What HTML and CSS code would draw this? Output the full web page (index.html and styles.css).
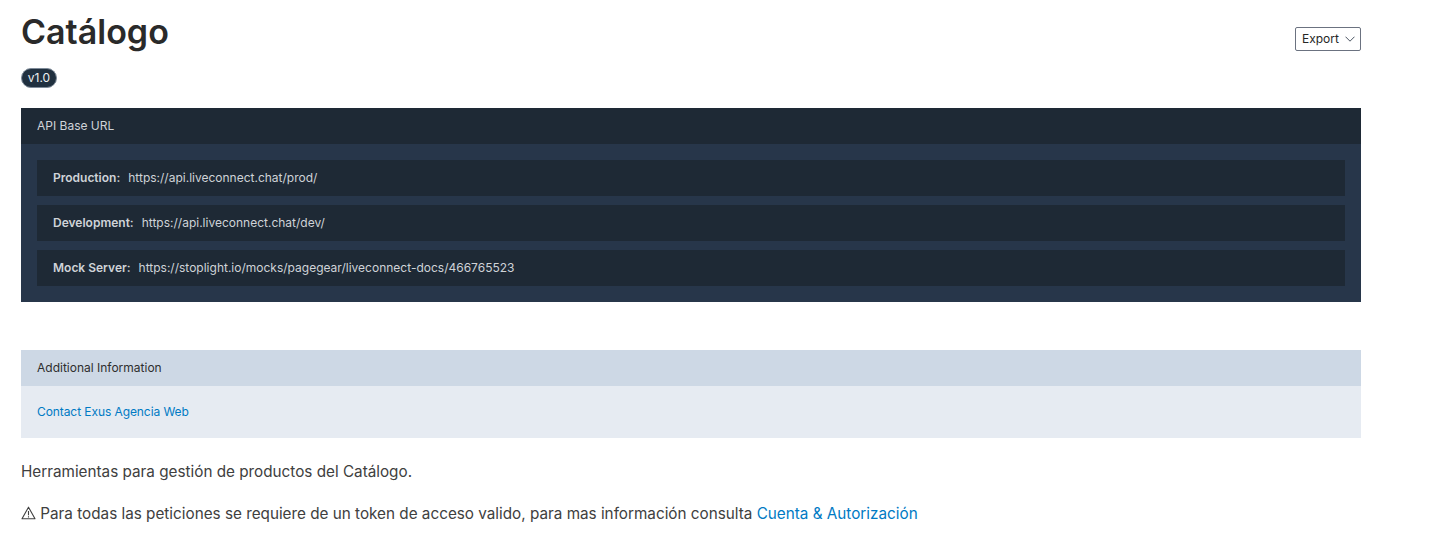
FILE: index.html
```html
<!DOCTYPE html>
<html lang="es">
<head>
<meta charset="utf-8">
<title>Catálogo</title>
<link rel="stylesheet" href="styles.css">
</head>
<body>
<main class="page">
  <header class="head">
    <div>
      <h1 class="title">Catálogo</h1>
      <span class="badge">v1.0</span>
    </div>
    <button class="export" type="button">Export
      <svg class="chev" width="10" height="6" viewBox="0 0 10 6" aria-hidden="true"><path d="M.5.7 5 5.2 9.5.7" fill="none" stroke="#4b5563" stroke-width="1"/></svg>
    </button>
  </header>
  <section class="servers">
    <div class="servers-head">API Base URL</div>
    <div class="servers-body">
      <div class="server"><strong>Production:</strong><span>https://api.liveconnect.chat/prod/</span></div>
      <div class="server"><strong>Development:</strong><span>https://api.liveconnect.chat/dev/</span></div>
      <div class="server"><strong>Mock Server:</strong><span>https://stoplight.io/mocks/pagegear/liveconnect-docs/466765523</span></div>
    </div>
  </section>
  <section class="info">
    <div class="info-head">Additional Information</div>
    <div class="info-body"><a href="#">Contact Exus Agencia Web</a></div>
  </section>
  <p class="text">Herramientas para gestión de productos del Catálogo.</p>
  <p class="text warn"><svg class="warn-icon" width="15" height="14" viewBox="0 0 15 14" aria-hidden="true"><path d="M7.5 1.2 14 12.8H1Z" fill="none" stroke="#404040" stroke-width="1.1" stroke-linejoin="round"/><path d="M7.5 5v4.2M7.5 10.2v1.2" fill="none" stroke="#404040" stroke-width="1.1"/></svg> Para todas las peticiones se requiere de un token de acceso valido, para mas información consulta <a href="#">Cuenta &amp; Autorización</a></p>
</main>
</body>
</html>
```
FILE: styles.css
```css
* { box-sizing: border-box; }
html, body { margin: 0; padding: 0; }
body {
  background: #fff;
  color: #262626;
  font-family: Inter, "Liberation Sans", sans-serif;
  font-size: 15.27px;
  height: 558px;
  overflow: hidden;
}
.page { width: 1340px; margin-left: 21px; padding-top: 12px; }
.head { display: flex; justify-content: space-between; align-items: flex-start; }
.title {
  margin: 0;
  font-size: 34px;
  line-height: 40px;
  font-weight: 600;
  color: #2a2a2a;
}
.badge {
  display: block;
  width: 36px;
  height: 20px;
  margin-top: 16px;
  border-radius: 10px;
  background: #20303f;
  border: 1px solid #7e8b99;
  color: #eef0f2;
  font-size: 12px;
  line-height: 18px;
  text-align: center;
}
.export {
  display: flex;
  align-items: center;
  gap: 6px;
  margin-top: 15px;
  width: 66px;
  height: 24px;
  padding: 0 0 0 6px;
  background: #fff;
  border: 1px solid #6b7280;
  border-radius: 2px;
  color: #262626;
  font: 12px/22px Inter, "Liberation Sans", sans-serif;
}
.servers { margin-top: 20px; background: #27364a; padding-bottom: 16px; }
.servers-head {
  height: 36px;
  padding: 0 16px;
  background: #1e2935;
  color: #cfd3d8;
  font-size: 12px;
  line-height: 36px;
}
.servers-body { display: flex; flex-direction: column; gap: 9px; padding: 16px 16px 0; }
.server {
  display: flex;
  gap: 8px;
  height: 36px;
  padding: 0 16px;
  background: #1e2935;
  color: #cfd3d8;
  font-size: 12px;
  line-height: 36px;
}
.server strong { font-weight: 600; }
.info { margin-top: 48px; }
.info-head {
  height: 36px;
  padding: 0 16px;
  background: #cdd8e5;
  color: #2e2e2e;
  font-size: 12px;
  line-height: 36px;
}
.info-body {
  height: 52px;
  padding: 0 16px;
  background: #e6ebf2;
  font-size: 12px;
  line-height: 52px;
}
.info-body a { letter-spacing: -0.08px; }
a { color: #007ac4; text-decoration: none; }
.text { margin: 0; color: #404040; line-height: 24px; }
.info + .text { margin-top: 22px; }
.text + .text { margin-top: 18px; }
.warn-icon { vertical-align: -1px; }
```
